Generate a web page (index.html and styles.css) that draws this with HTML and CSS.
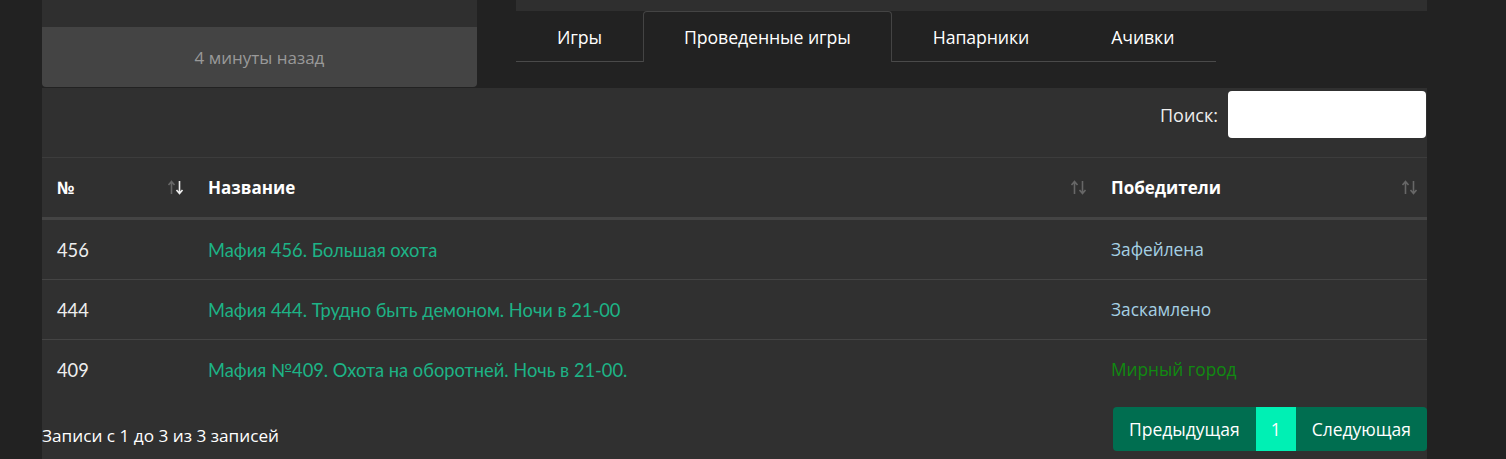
FILE: index.html
```html
<!DOCTYPE html>
<html>
<head>
    <title>Проведенные игры</title>
    <link rel="stylesheet" href="styles.css">
</head>
<body>
    <div class="page">
        <div class="top">
            <div class="card">
                <div class="card-body"></div>
                <div class="card-footer">4 минуты назад</div>
            </div>
            <div class="side">
                <div class="strip"></div>
                <ul class="tabs">
                    <li>Игры</li>
                    <li class="active">Проведенные игры</li>
                    <li>Напарники</li>
                    <li>Ачивки</li>
                </ul>
            </div>
        </div>
        <div class="panel">
            <div class="search">
                <label for="q">Поиск:</label>
                <input id="q" type="search">
            </div>
            <table class="games">
                <thead>
                    <tr>
                        <th class="col-num">№
                            <svg class="sort" width="17" height="15" viewBox="0 0 17 15"><path class="off" d="M4.5 14V1.5M1.5 5l3-3.5 3 3.5"/><path class="on" d="M12.5 1v12.5M9.5 10l3 3.5 3-3.5"/></svg>
                        </th>
                        <th class="col-name">Название
                            <svg class="sort" width="17" height="15" viewBox="0 0 17 15"><path class="off" d="M4.5 14V1.5M1.5 5l3-3.5 3 3.5"/><path class="off" d="M12.5 1v12.5M9.5 10l3 3.5 3-3.5"/></svg>
                        </th>
                        <th class="col-win">Победители
                            <svg class="sort" width="17" height="15" viewBox="0 0 17 15"><path class="off" d="M4.5 14V1.5M1.5 5l3-3.5 3 3.5"/><path class="off" d="M12.5 1v12.5M9.5 10l3 3.5 3-3.5"/></svg>
                        </th>
                    </tr>
                </thead>
                <tbody>
                    <tr>
                        <td>456</td>
                        <td><a href="#">Мафия 456. Большая охота</a></td>
                        <td class="fail">Зафейлена</td>
                    </tr>
                    <tr>
                        <td>444</td>
                        <td><a href="#">Мафия 444. Трудно быть демоном. Ночи в 21-00</a></td>
                        <td class="fail">Заскамлено</td>
                    </tr>
                    <tr>
                        <td>409</td>
                        <td><a href="#">Мафия №409. Охота на оборотней. Ночь в 21-00.</a></td>
                        <td class="town">Мирный город</td>
                    </tr>
                </tbody>
            </table>
            <div class="footer">
                <div class="info">Записи с 1 до 3 из 3 записей</div>
                <div class="pager">
                    <a href="#">Предыдущая</a>
                    <a href="#" class="current">1</a>
                    <a href="#">Следующая</a>
                </div>
            </div>
        </div>
    </div>
</body>
</html>
```

FILE: styles.css
```css
body {
    margin: 0;
    background-color: #222;
    font-family: "Open Sans", sans-serif;
    color: #eee;
    overflow: hidden;
}
.page {
    width: 1385px;
    margin-left: 42px;
}
.top {
    display: flex;
    height: 88px;
}
.card {
    width: 435px;
    height: 87px;
    display: flex;
    flex-direction: column;
}
.card-body {
    height: 27px;
    background-color: #2f2f2f;
}
.card-footer {
    flex: 1;
    background-color: #444;
    border-radius: 0 0 4px 4px;
    color: #999;
    font-size: 17px;
    display: flex;
    align-items: center;
    justify-content: center;
}
.side {
    margin-left: 39px;
    flex: 1;
}
.strip {
    height: 11px;
    background-color: #2f2f2f;
}
.tabs {
    list-style: none;
    margin: 0;
    padding: 0;
    display: flex;
    width: 700px;
    height: 50px;
    border-bottom: 1px solid #4a4a4a;
}
.tabs li {
    flex-shrink: 0;
    white-space: nowrap;
    padding: 0 40px;
    border: 1px solid transparent;
    border-bottom: none;
    border-radius: 4px 4px 0 0;
    font-size: 17.7px;
    letter-spacing: -0.1px;
    color: #fff;
    display: flex;
    align-items: center;
    margin-bottom: -1px;
}
.tabs li.active {
    border-color: #444;
    background-color: #222;
}
.panel {
    background-color: #303030;
    height: 371px;
}
.search {
    display: flex;
    justify-content: flex-end;
    align-items: center;
    gap: 10px;
    padding: 3px 1px 19px 0;
    font-size: 18px;
}
.search input {
    width: 198px;
    height: 47px;
    box-sizing: border-box;
    border: none;
    border-radius: 4px;
    background-color: #fff;
}
.games {
    width: 100%;
    border-collapse: collapse;
    font-family: Lato, sans-serif;
    font-size: 18.3px;
}
.games th {
    position: relative;
    text-align: left;
    height: 59px;
    padding: 0 15px;
    font-family: "Open Sans", sans-serif;
    font-size: 17px;
    font-weight: bold;
    color: #fff;
    border-top: 1px solid #3c3c3c;
    border-bottom: 3px solid #444;
}
.col-num { width: 121px; }
.col-win { width: 301px; }
.sort {
    position: absolute;
    right: 9px;
    top: 22px;
    fill: none;
    stroke-width: 1.6;
}
.sort .off {
    stroke: #676767;
}
.sort .on {
    stroke: #eee;
}
.games td {
    height: 59px;
    padding: 0 15px;
    border-top: 1px solid #444;
}
.games tbody tr:first-child td {
    border-top: none;
}
.games a {
    color: #1db386;
    text-decoration: none;
}
.games td.fail {
    color: #a6d0e4;
    font-family: "Open Sans", sans-serif;
    font-size: 17.3px;
}
.games td.town {
    color: #118a11;
    font-family: "Open Sans", sans-serif;
    font-size: 17.3px;
}
.footer {
    display: flex;
    justify-content: space-between;
    align-items: flex-start;
    padding-top: 8px;
}
.info {
    padding-top: 17px;
    font-size: 17.2px;
    color: #fff;
}
.pager {
    display: flex;
    height: 44px;
    border-radius: 4px;
    overflow: hidden;
}
.pager a {
    display: flex;
    align-items: center;
    padding: 0 16px;
    background-color: #006e50;
    color: #fff;
    text-decoration: none;
    font-size: 17.5px;
}
.pager a.current {
    padding: 0 15px;
    background-color: #00f0b4;
}
```
